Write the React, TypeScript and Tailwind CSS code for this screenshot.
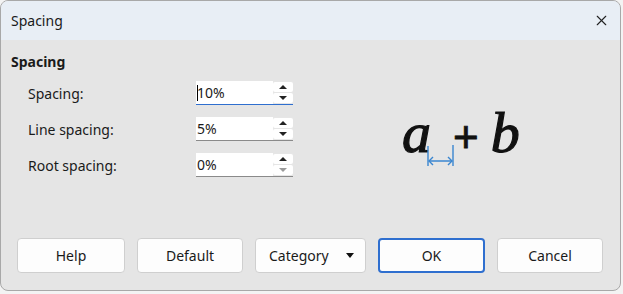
import { X } from 'lucide-react';

const rows = [
  { label: 'Spacing:', value: '10%', focused: true, downDisabled: false },
  { label: 'Line spacing:', value: '5%', focused: false, downDisabled: false },
  { label: 'Root spacing:', value: '0%', focused: false, downDisabled: true },
];

function SpinField({ value, focused, downDisabled }: { value: string; focused: boolean; downDisabled: boolean }) {
  return (
    <div className={`flex h-[24px] w-[97px] bg-white border-b ${focused ? 'border-[#2f6fcf]' : 'border-[#8a8a8a]'}`}>
      <div className="flex flex-1 items-center pl-[1px] text-[14px] text-[#1a1a1a]">
        {focused && <span className="mr-[-1px] h-[16px] w-px bg-black" />}
        {value}
      </div>
      <div className="flex w-[20px] flex-col gap-[1px] bg-[#e6e6e6] py-[1px]">
        <div className="flex flex-1 items-center justify-center rounded-[2px] bg-white">
          <span className="h-0 w-0 border-x-[4px] border-b-[4px] border-x-transparent border-b-[#222]" />
        </div>
        <div className="flex flex-1 items-center justify-center rounded-[2px] bg-white">
          <span className={`h-0 w-0 border-x-[4px] border-t-[4px] border-x-transparent ${downDisabled ? 'border-t-[#9a9a9a]' : 'border-t-[#222]'}`} />
        </div>
      </div>
    </div>
  );
}

function Btn({ children, primary, w }: { children: React.ReactNode; primary?: boolean; w: string }) {
  return (
    <button
      className={`flex h-[35px] ${w} items-center justify-center rounded-[4px] bg-[#fdfdfd] text-[14px] text-[#1a1a1a] ${
        primary ? 'border-2 border-[#2f6fcf]' : 'border border-[#cfcfcf]'
      }`}
    >
      {children}
    </button>
  );
}

export default function App() {
  return (
    <div className="h-[294px] w-[623px] bg-[#f3f3f3]" style={{ fontFamily: '"Noto Sans", "Open Sans", sans-serif' }}>
      <div className="flex h-[291px] w-[621px] flex-col overflow-hidden rounded-[8px] border border-[#a8a8a8] bg-[#e5e5e5]">
        {/* title bar */}
        <div className="flex h-[39px] shrink-0 items-center justify-between bg-[#e8eef5] pl-[10px] pr-[10px]">
          <span className="text-[14px] text-[#1a1a1a]">Spacing</span>
          <X className="h-[17px] w-[17px] text-[#222]" strokeWidth={1.6} />
        </div>

        <div className="flex flex-1 flex-col px-[10px]">
          <div className="flex">
            <div className="w-[300px]">
              <div className="mt-[11px] text-[14px] font-bold text-[#1a1a1a]">Spacing</div>
              <div className="mt-[9px] flex flex-col gap-[12px] pl-[17px]">
                {rows.map((r) => (
                  <div key={r.label} className="flex items-center">
                    <span className="w-[168px] text-[14px] text-[#1a1a1a]">{r.label}</span>
                    <SpinField value={r.value} focused={r.focused} downDisabled={r.downDisabled} />
                  </div>
                ))}
              </div>
            </div>
            {/* preview */}
            <div className="relative flex-1 pl-[91px] pt-[64px]">
              <div className="flex items-baseline text-[#111]">
                <span
                  className="text-[58px] italic leading-none [-webkit-text-stroke:1.2px_#111]"
                  style={{ fontFamily: '"Liberation Serif", serif' }}
                >
                  a
                </span>
                <span
                  className="ml-[22px] text-[44px] leading-none [-webkit-text-stroke:0.8px_#111]"
                  style={{ fontFamily: '"Liberation Sans", sans-serif' }}
                >
                  +
                </span>
                <span
                  className="ml-[12px] text-[58px] italic leading-none [-webkit-text-stroke:1.2px_#111]"
                  style={{ fontFamily: '"Liberation Serif", serif' }}
                >
                  b
                </span>
              </div>
              <svg className="absolute left-[116px] top-[105px]" width="28" height="24" viewBox="0 0 28 24">
                <g stroke="#3a86d0" strokeWidth="1.4" fill="none">
                  <line x1="1" y1="1" x2="1" y2="21" />
                  <line x1="26" y1="0" x2="26" y2="21" />
                  <line x1="2" y1="16" x2="25" y2="16" />
                  <polyline points="6,12 2,16 6,20" />
                  <polyline points="21,12 25,16 21,20" />
                </g>
              </svg>
            </div>
          </div>

          <div className="mt-auto mb-[17px] flex gap-[12px] pl-[6px]">
            <Btn w="w-[108px]">Help</Btn>
            <Btn w="w-[106px]">Default</Btn>
            <button className="flex h-[35px] w-[111px] items-center justify-between rounded-[4px] border border-[#cfcfcf] bg-[#fdfdfd] pl-[13px] pr-[11px] text-[14px] text-[#1a1a1a]">
              Category
              <span className="h-0 w-0 border-x-[4px] border-t-[5px] border-x-transparent border-t-[#111]" />
            </button>
            <Btn primary w="w-[107px]">OK</Btn>
            <Btn w="w-[106px]">Cancel</Btn>
          </div>
        </div>
      </div>
    </div>
  );
}
